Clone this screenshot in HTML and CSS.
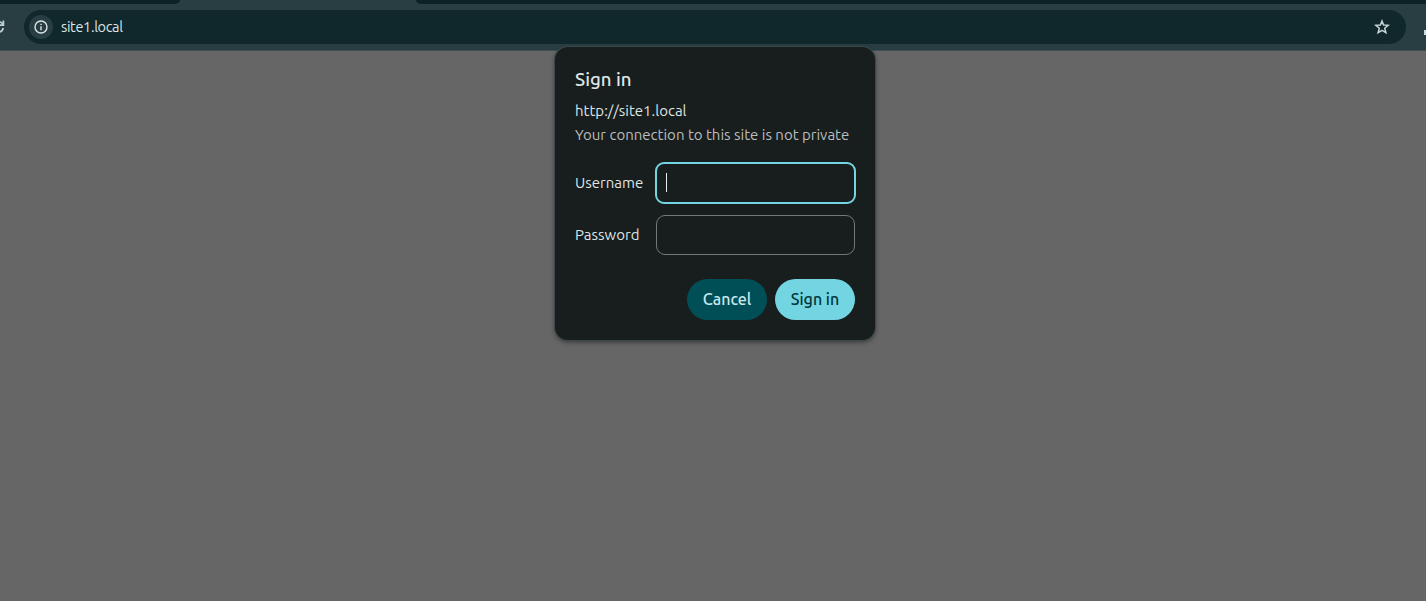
FILE: index.html
```html
<!DOCTYPE html>
<html lang="en">
<head>
<meta charset="utf-8">
<title>site1.local</title>
<link rel="stylesheet" href="styles.css">
</head>
<body>
<header class="browser">
  <div class="tabs"><div class="tab-left"></div><div class="tab-active"></div><div class="tab-rest"></div></div>
  <div class="toolbar">
    <svg class="reload" viewBox="0 0 5 16" fill="none" stroke="#c1d0d2" stroke-width="1.7"><path d="M-1 2.6A5.3 5.3 0 0 1 3 5.5M0 6.2H3.4V1.6M3.2 9A5 5 0 0 1-2 13"/></svg>
    <div class="omnibox">
      <span class="info"><svg width="14" height="14" viewBox="0 0 14 14" fill="none" stroke="#dce5e6" stroke-width="1.4"><circle cx="7" cy="7" r="6"/><path d="M7 6.2V10.2M7 3.7V5.1"/></svg></span>
      <span class="address">site1.local</span>
      <svg class="star" width="16" height="16" viewBox="0 0 16 16" fill="none" stroke="#c8d3d4" stroke-width="1.5"><path d="M8 2L9.6 6L14.2 6.3L10.7 9.2L11.9 13.7L8 11.3L4.1 13.7L5.3 9.2L1.8 6.3L6.4 6Z"/></svg>
    </div>
    <span class="download"></span>
  </div>
</header>
<main class="page">
  <form class="dialog">
    <h1 class="title">Sign in</h1>
    <p class="origin">http://site1.local</p>
    <p class="notice">Your connection to this site is not private</p>
    <div class="fields">
      <label class="label" for="user">Username</label>
      <div class="field focused" id="user"><span class="caret"></span></div>
      <label class="label" for="pass">Password</label>
      <div class="field" id="pass"></div>
    </div>
    <div class="actions">
      <button type="button" class="button cancel">Cancel</button>
      <button type="button" class="button signin">Sign in</button>
    </div>
  </form>
</main>
</body>
</html>
```
FILE: styles.css
```css
* { box-sizing: border-box; }
body {
  margin: 0;
  height: 601px;
  overflow: hidden;
  display: flex;
  flex-direction: column;
  background: #666;
  font-family: Ubuntu, "Noto Sans", sans-serif;
  font-size: 15px;
}
.browser { background: #283e42; border-bottom: 1px solid #3d4f52; }
.tabs { display: flex; height: 4px; }
.tab-left { width: 180px; background: #0c2226; border-bottom-right-radius: 8px 6px; }
.tab-active { width: 236px; }
.tab-rest { flex: 1; background: #0c2226; border-bottom-left-radius: 8px 6px; }
.toolbar { display: flex; align-items: center; height: 46px; }
.reload { width: 5px; height: 16px; margin-right: 19px; }
.omnibox {
  width: 1382px;
  height: 34px;
  padding: 0 16px 0 5px;
  display: flex;
  align-items: center;
  border-radius: 17px;
  background: #10282c;
}
.info {
  width: 24px;
  height: 24px;
  display: flex;
  align-items: center;
  justify-content: center;
  border-radius: 50%;
  background: #283e42;
}
.address { margin-left: 8px; padding-bottom: 2px; color: #dde5e6; font-size: 14.5px; letter-spacing: -.35px; }
.star { margin-left: auto; }
.download { width: 2px; height: 5px; margin: 10px 0 0 18px; background: #c1e0e2; }
.page { flex: 1; display: flex; justify-content: center; align-items: flex-start; padding-left: 4px; }
.dialog {
  width: 320px;
  height: 293px;
  margin-top: -4px;
  padding: 21px 20px 20px;
  border-radius: 13px;
  background: #181d1d;
  box-shadow: 0 0 0 1px #3c484a, 0 2px 5px rgba(0, 0, 0, .5);
  color: #dfe5e5;
}
.title, .origin, .notice { margin: 0; white-space: nowrap; }
.title { height: 24px; line-height: 24px; font-size: 18.67px; font-weight: 500; }
.origin { margin-top: 7px; height: 24px; line-height: 24px; }
.notice { height: 24px; line-height: 24px; color: #b8bebe; }
.fields {
  display: grid;
  grid-template-columns: 81px 199px;
  grid-template-rows: 40px 40px;
  row-gap: 12px;
  align-items: center;
  margin-top: 16px;
}
.label { padding-bottom: 2px; }
.field { height: 40px; display: flex; align-items: center; padding-left: 9px; border: 1px solid #727777; border-radius: 9px; }
.focused { height: 42px; margin: -1px; border: 2px solid #73d5e1; }
.caret { width: 1px; height: 19px; margin-bottom: 1px; background: #e8eeee; }
.actions { display: flex; justify-content: flex-end; gap: 8px; margin-top: 24px; }
.button { width: 80px; height: 41px; padding: 0 0 2px; border: 0; border-radius: 20.5px; font: 500 16px Ubuntu, "Noto Sans", sans-serif; white-space: nowrap; }
.cancel { background: #004f56; color: #c9eaf0; }
.signin { background: #73d5e1; color: #00363c; }
```
